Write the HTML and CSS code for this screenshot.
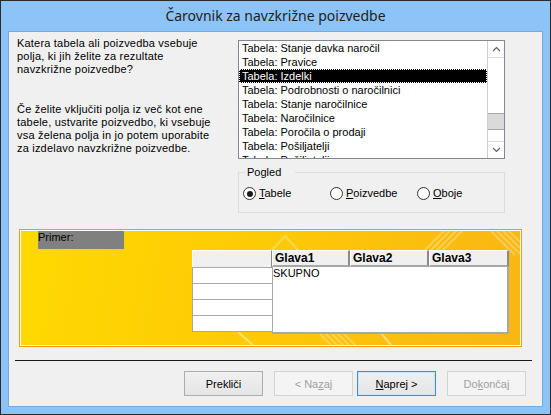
FILE: index.html
```html
<!DOCTYPE html>
<html lang="sl">
<head>
<meta charset="utf-8">
<title>Čarovnik za navzkrižne poizvedbe</title>
<link rel="stylesheet" href="styles.css">
</head>
<body>
<div class="window">
  <div class="titlebar">Čarovnik za navzkrižne poizvedbe</div>
  <div class="client">
    <div class="top">
      <div class="intro">
        <p>Katera tabela ali poizvedba vsebuje<br>polja, ki jih želite za rezultate<br>navzkrižne poizvedbe?</p>
        <p class="p2">Če želite vključiti polja iz več kot ene<br>tabele, ustvarite poizvedbo, ki vsebuje<br>vsa želena polja in jo potem uporabite<br>za izdelavo navzkrižne poizvedbe.</p>
      </div>
      <div class="side">
        <div class="listbox">
          <ul class="items">
            <li>Tabela: Stanje davka naročil</li>
            <li>Tabela: Pravice</li>
            <li class="sel">Tabela: Izdelki</li>
            <li>Tabela: Podrobnosti o naročilnici</li>
            <li>Tabela: Stanje naročilnice</li>
            <li>Tabela: Naročilnice</li>
            <li>Tabela: Poročila o prodaji</li>
            <li>Tabela: Pošiljatelji</li>
            <li>Tabela: Pošiljatelji</li>
          </ul>
          <div class="scrollbar">
            <div class="sb-btn sb-up"><svg width="9" height="6" viewBox="0 0 9 6"><polyline points="1,5 4.5,1.5 8,5" fill="none" stroke="#606060" stroke-width="1.2"/></svg></div>
            <div class="sb-track"><div class="sb-thumb"></div></div>
            <div class="sb-btn sb-down"><svg width="9" height="6" viewBox="0 0 9 6"><polyline points="1,1 4.5,4.5 8,1" fill="none" stroke="#606060" stroke-width="1.2"/></svg></div>
          </div>
        </div>
        <fieldset class="group">
          <legend>Pogled</legend>
          <div class="radios">
            <label class="radio"><span class="dot checked"></span><span><u>T</u>abele</span></label>
            <label class="radio"><span class="dot"></span><span><u>P</u>oizvedbe</span></label>
            <label class="radio"><span class="dot"></span><span><u>O</u>boje</span></label>
          </div>
        </fieldset>
      </div>
    </div>

    <div class="preview">
      <svg class="deco" width="501" height="116" viewBox="0 0 501 116">
        <g stroke="#ffffff" stroke-opacity="0.28" stroke-width="2" fill="none">
          <polyline points="252,20 265,6 278,20"/>
          <line x1="405" y1="20" x2="425" y2="0"/>
          <line x1="411" y1="20" x2="431" y2="0"/>
          <line x1="417" y1="20" x2="437" y2="0"/>
          <line x1="423" y1="20" x2="443" y2="0"/>
          <line x1="470" y1="0" x2="495" y2="25"/>
          <line x1="476" y1="0" x2="500" y2="24"/>
          <line x1="482" y1="0" x2="500" y2="18"/>
          <line x1="488" y1="0" x2="500" y2="12"/>
          <line x1="300" y1="104" x2="312" y2="116"/>
          <line x1="306" y1="104" x2="318" y2="116"/>
          <line x1="312" y1="104" x2="324" y2="116"/>
          <line x1="318" y1="104" x2="330" y2="116"/>
          <line x1="324" y1="104" x2="336" y2="116"/>
        </g>
        <g stroke="#ffffff" stroke-opacity="0.45" stroke-width="2" fill="none">
          <line x1="218" y1="102" x2="234" y2="116"/>
          <line x1="360" y1="102" x2="372" y2="116"/>
        </g>
      </svg>
      <div class="primer">Primer:</div>
      <div class="grid">
        <div class="rowheads">
          <div class="corner"></div>
          <div class="rh"></div>
          <div class="rh"></div>
          <div class="rh"></div>
          <div class="rh last"></div>
        </div>
        <div class="data">
          <div class="heads">
            <div class="ch c1">Glava1</div>
            <div class="ch c2">Glava2</div>
            <div class="ch c3">Glava3</div>
          </div>
          <div class="body">SKUPNO</div>
        </div>
      </div>
    </div>

    <div class="sep"></div>

    <div class="buttons">
      <button class="btn">Prekliči</button>
      <button class="btn disabled g-small">&lt; Na<u>z</u>aj</button>
      <button class="btn default"><u>N</u>aprej &gt;</button>
      <button class="btn disabled">Do<u>k</u>ončaj</button>
    </div>
  </div>
</div>
</body>
</html>
```
FILE: styles.css
```css
html, body {
  margin: 0;
  padding: 0;
  background: #ffffff;
}

body {
  font-family: "Liberation Sans", Arial, sans-serif;
  font-size: 11px;
  color: #000;
}

.window {
  box-sizing: border-box;
  width: 551px;
  height: 415px;
  border: 1px solid #2a2a2a;
  background: #8cc4f7;
  padding: 0 7px 7px 7px;
  display: flex;
  flex-direction: column;
}

.titlebar {
  height: 30px;
  line-height: 30px;
  text-align: center;
  font-family: "Noto Sans", "Open Sans", sans-serif;
  font-size: 14px;
  color: #1e1e1e;
  white-space: nowrap;
}

.client {
  box-sizing: border-box;
  width: 535px;
  height: 376px;
  border: 1px solid #74abe0;
  background: #f0f0f0;
  display: flex;
  flex-direction: column;
}

/* top section */
.top {
  display: flex;
  align-items: flex-start;
}

.intro {
  box-sizing: border-box;
  width: 229px;
  padding-left: 8px;
  margin-top: 5px;
  letter-spacing: 0.2px;
}

.intro p {
  margin: 0;
  line-height: 13px;
  white-space: nowrap;
}

.intro .p2 {
  margin-top: 27px;
}

.side {
  width: 267px;
  margin-top: 8px;
}

.listbox {
  box-sizing: border-box;
  height: 119px;
  border: 1px solid #828790;
  background: #fff;
  display: flex;
}

.items {
  list-style: none;
  margin: 0;
  padding: 0;
  flex: 1;
  overflow: hidden;
}

.items li {
  height: 14px;
  line-height: 14px;
  padding-left: 3px;
  white-space: nowrap;
}

.items li.sel {
  background: #000;
  color: #fff;
  outline: 1px dotted #fff;
  outline-offset: -1px;
}

.scrollbar {
  box-sizing: border-box;
  width: 17px;
  border-left: 1px solid #cdcdcd;
  display: flex;
  flex-direction: column;
  background: #fff;
}

.sb-btn {
  height: 16px;
  display: flex;
  align-items: center;
  justify-content: center;
}

.sb-up {
  border-bottom: 1px solid #dadada;
}

.sb-down {
  border-top: 1px solid #dadada;
}

.sb-track {
  flex: 1;
}

.sb-thumb {
  box-sizing: border-box;
  height: 17px;
  margin-top: 55px;
  background: #dadada;
  border-top: 1px solid #a8a8a8;
  border-bottom: 1px solid #a8a8a8;
}

.group {
  margin: 7px 0 0 0;
  padding: 0 0 12px 0;
  border: 1px solid #dcdcdc;
  min-inline-size: 0;
}

.group legend {
  margin-left: 6px;
  padding: 0 14px 0 2px;
  line-height: 13px;
  font-size: 11px;
}

.radios {
  display: flex;
  margin-top: 8px;
  padding-left: 4px;
  height: 13px;
}

.radio {
  width: 88px;
  display: flex;
  align-items: center;
  gap: 3px;
  line-height: 13px;
  white-space: nowrap;
}

.dot {
  box-sizing: border-box;
  width: 13px;
  height: 13px;
  border: 1px solid #333;
  border-radius: 50%;
  background: #fff;
  display: flex;
  align-items: center;
  justify-content: center;
  flex: none;
}

.dot.checked::after {
  content: "";
  width: 6px;
  height: 6px;
  border-radius: 50%;
  background: #1a1a1a;
}

/* preview */
.preview {
  position: relative;
  box-sizing: border-box;
  width: 503px;
  height: 118px;
  margin: 16px 0 0 10px;
  border: 1px solid #f39a12;
  box-shadow: inset 0 0 0 1px #ffffff;
  background: linear-gradient(100deg, #ffd900 0%, #fdcb06 45%, #fbbf0e 75%, #f9b614 100%);
}

.deco {
  position: absolute;
  left: 0;
  top: 0;
}

.primer {
  position: relative;
  width: 86px;
  height: 18px;
  line-height: 13px;
  margin: 1px 0 0 18px;
  background: #808080;
  color: #000;
}

.grid {
  position: relative;
  display: flex;
  margin: 1px 0 0 172px;
}

.rowheads {
  width: 80px;
}

.corner {
  box-sizing: border-box;
  height: 17px;
  background: #f0f0f0;
  border-top: 1px solid #fff;
  border-left: 1px solid #fff;
  border-right: 1px solid #8a8a8a;
}

.rh {
  box-sizing: border-box;
  height: 16px;
  background: #fff;
  border-left: 1px solid #a8a8a8;
  border-top: 1px solid #a8a8a8;
}

.rh.last {
  height: 17px;
  border-bottom: 1px solid #a8a8a8;
}

.data {
  width: 237px;
}

.heads {
  display: flex;
  height: 17px;
}

.ch {
  box-sizing: border-box;
  height: 17px;
  background: #f0f0f0;
  border-top: 1px solid #fff;
  border-left: 1px solid #fff;
  border-right: 2px solid #8a8a8a;
  border-bottom: 2px solid #a8a8a8;
  padding-left: 2px;
  font-weight: bold;
  font-size: 12px;
  line-height: 14px;
  white-space: nowrap;
}

.c1 { width: 78px; }
.c2 { width: 79px; }
.c3 { width: 80px; }

.body {
  box-sizing: border-box;
  height: 67px;
  background: #fff;
  border-left: 1px solid #a8a8a8;
  border-right: 2px solid #a8a8a8;
  border-bottom: 2px solid #a8a8a8;
  line-height: 13px;
  padding-left: 0;
}

/* separator & buttons */
.sep {
  width: 517px;
  height: 1px;
  margin: 13px 0 0 6px;
  background: #1a1a1a;
}

.buttons {
  display: flex;
  margin: 10px 0 0 175px;
}

.btn {
  box-sizing: border-box;
  width: 79px;
  height: 25px;
  margin: 0 11px 0 0;
  padding: 0;
  font-family: "Liberation Sans", Arial, sans-serif;
  font-size: 11px;
  color: #000;
  border: 1px solid #adadad;
  background: linear-gradient(#f0f0f0, #e5e5e5);
  border-radius: 0;
}

.btn.g-small {
  margin-right: 4px;
}

.btn.default {
  border-color: #3d8fe0;
  box-shadow: inset 0 0 0 1px #cfe4f8;
}

.btn.disabled {
  color: #a0a0a0;
  border-color: #d2d2d2;
  background: #f4f4f4;
}
```
